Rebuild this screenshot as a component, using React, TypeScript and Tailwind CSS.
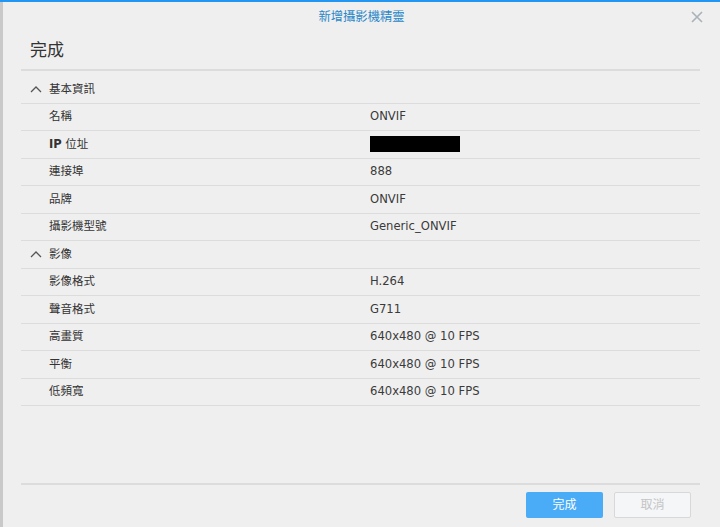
import React from "react";

const font = { fontFamily: '"DejaVu Sans", "Noto Sans CJK TC", sans-serif' };

type Row = { label: React.ReactNode; value?: React.ReactNode; section?: boolean };

const rows: Row[] = [
  { label: "基本資訊", section: true },
  { label: "名稱", value: "ONVIF" },
  {
    label: (
      <span>
        <span className="font-bold">IP</span> 位址
      </span>
    ),
    value: <span className="block w-[90px] h-[16px] bg-black" />,
  },
  { label: "連接埠", value: "888" },
  { label: "品牌", value: "ONVIF" },
  { label: "攝影機型號", value: "Generic_ONVIF" },
  { label: "影像", section: true },
  { label: "影像格式", value: "H.264" },
  { label: "聲音格式", value: "G711" },
  { label: "高畫質", value: "640x480 @ 10 FPS" },
  { label: "平衡", value: "640x480 @ 10 FPS" },
  { label: "低頻寬", value: "640x480 @ 10 FPS" },
];

function Chevron() {
  return (
    <svg width="12" height="8" viewBox="0 0 12 8" className="text-[#555]">
      <path d="M1 7 L6 2 L11 7" fill="none" stroke="currentColor" strokeWidth="1.3" />
    </svg>
  );
}

export default function App() {
  return (
    <div
      className="w-[720px] h-[527px] bg-[#efefef] border-t-2 border-[#2196f3] flex overflow-hidden"
      style={font}
    >
      <div className="w-[3px] h-full bg-[#c9c9c9] shrink-0" />
      <div className="flex-1 flex flex-col">
        <div className="h-[30px] relative flex items-center justify-center">
          <span className="text-[12.3px] text-[#2a87c8]">新增攝影機精靈</span>
          <svg
            width="12"
            height="12"
            viewBox="0 0 12 12"
            className="absolute right-[17px] top-[9px] text-[#a9b1b9]"
          >
            <path d="M1 1 L11 11 M11 1 L1 11" stroke="currentColor" strokeWidth="1.6" fill="none" />
          </svg>
        </div>
        <div className="pl-[18px] pr-[20px] flex-1 flex flex-col">
          <div className="h-[37px] flex items-center pl-[9px] text-[17px] text-[#333]">完成</div>
          <div className="h-[2px] bg-[#dcdcdc]" />
          <div className="mt-[5px]">
            {rows.map((r, i) => (
              <div
                key={i}
                className="h-[27.5px] border-b border-[#dcdcdc] flex items-center text-[11.5px] text-[#333]"
              >
                {r.section ? (
                  <div className="flex items-center pl-[9px] gap-[7px]">
                    <Chevron />
                    <span>{r.label}</span>
                  </div>
                ) : (
                  <>
                    <div className="w-[349px] pl-[28px]">{r.label}</div>
                    <div className="text-[11.6px] text-[#3a3a3a]">{r.value}</div>
                  </>
                )}
              </div>
            ))}
          </div>
          <div className="flex-1" />
          <div className="h-[2px] bg-[#dcdcdc]" />
          <div className="h-[42px] flex items-start justify-end gap-[11px] pt-[7px] pr-[9px]">
            <button className="w-[77px] h-[26px] rounded-[2px] bg-[#4aabf7] text-white text-[12px]">
              完成
            </button>
            <button className="w-[77px] h-[26px] rounded-[2px] bg-[#f5f6f8] border border-[#d8d8d8] text-[#c4c4c4] text-[12px]">
              取消
            </button>
          </div>
        </div>
      </div>
    </div>
  );
}
